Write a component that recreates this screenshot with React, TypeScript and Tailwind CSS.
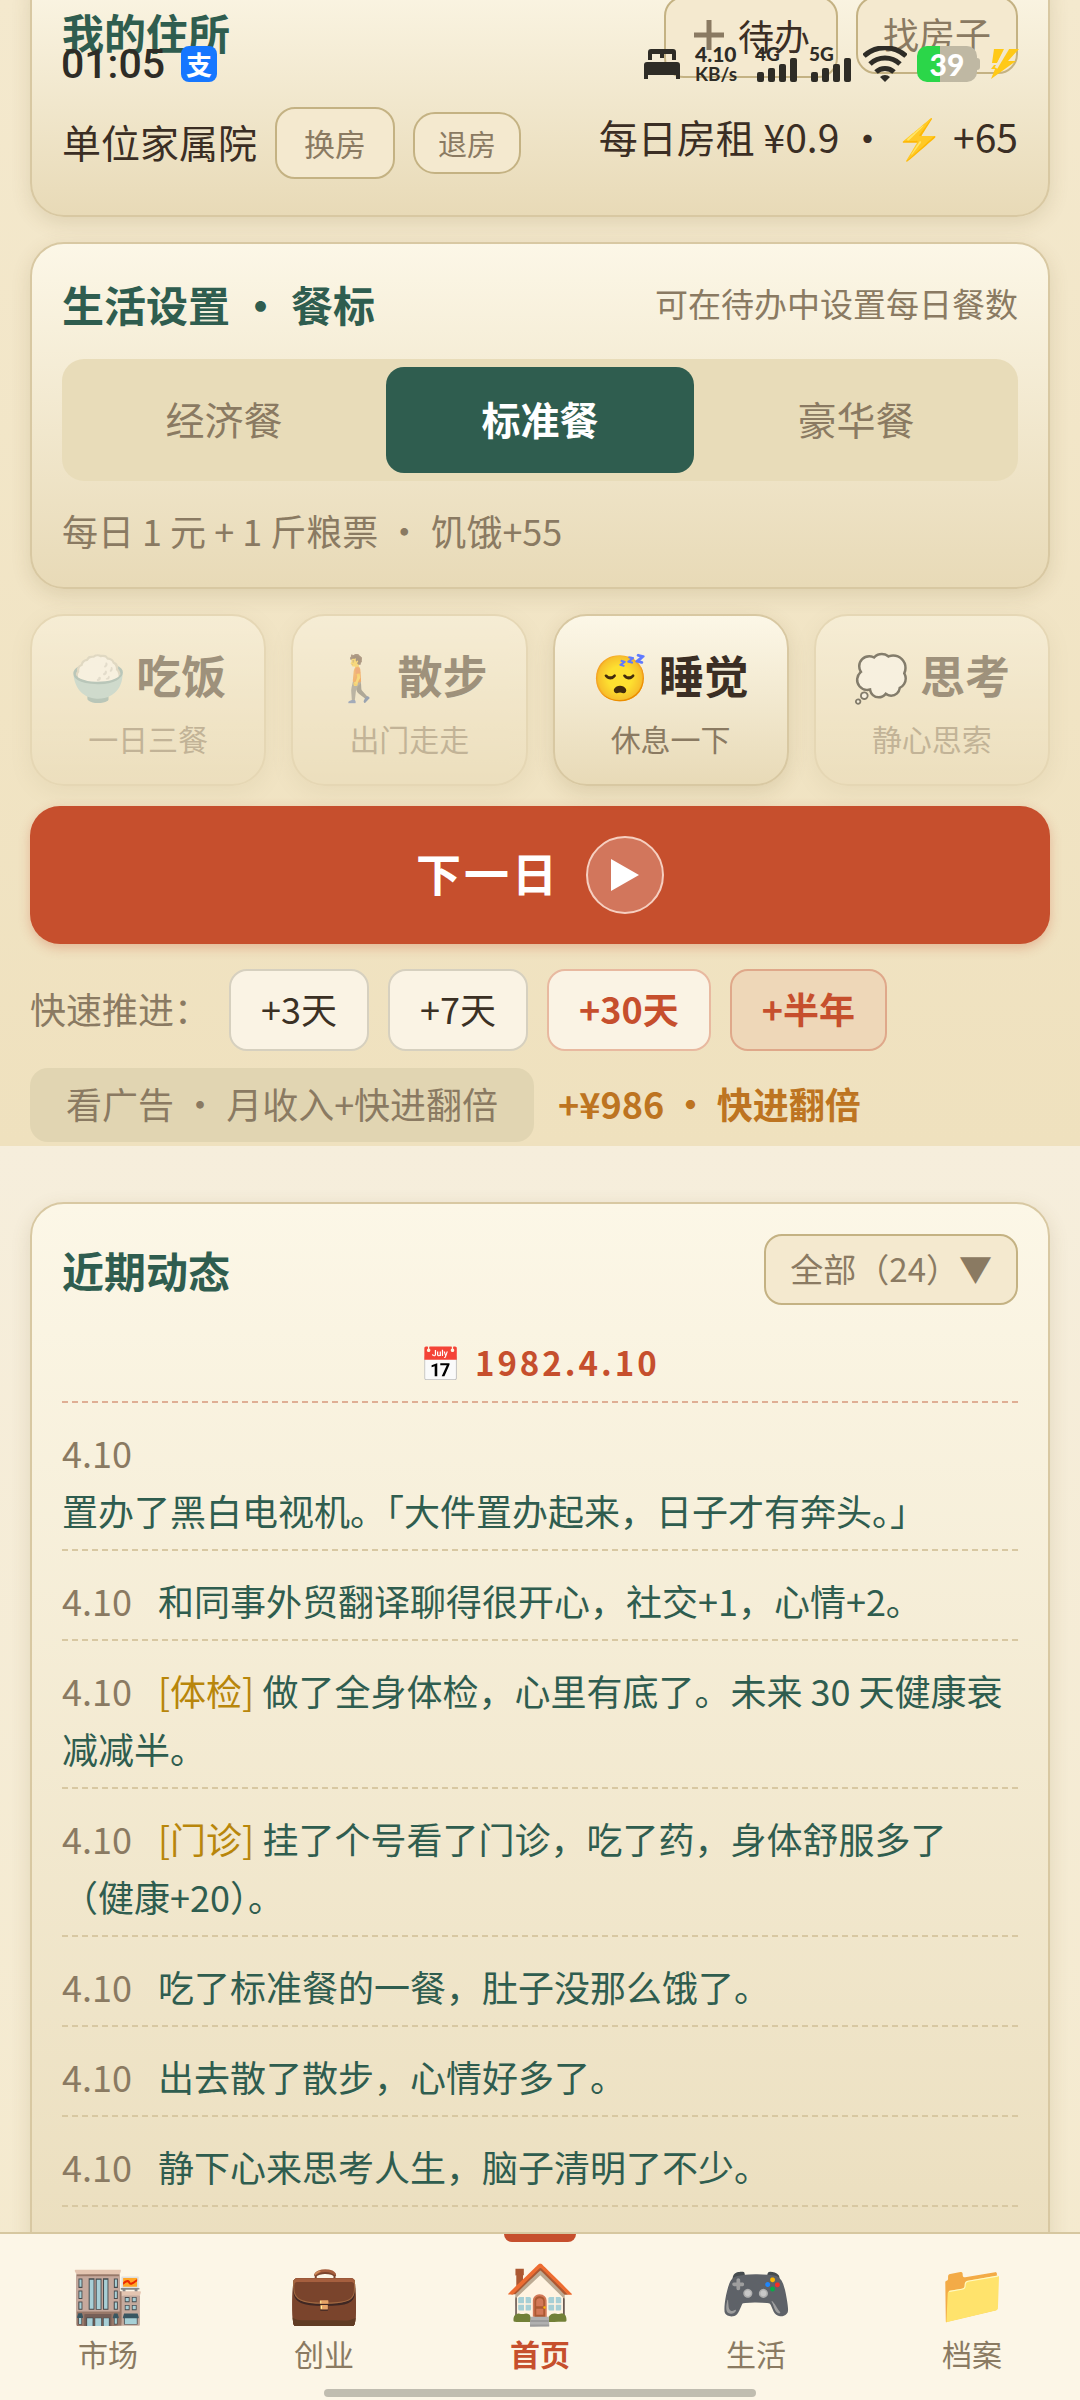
import type { ReactNode } from 'react'

const card =
  'rounded-[34px] border-2 border-[#d8c8a2] bg-linear-to-b from-[#fcf7e7] to-[#e8dab7] shadow-[0_6px_20px_rgba(100,75,30,0.14)]'
const smallButton = 'border-2 border-[#c4b283] bg-[#f4e9cf] text-[#8a7a62]'

const meals = ['经济餐', '标准餐', '豪华餐']

const actions = [
  { icon: '🍚', title: '吃饭', hint: '一日三餐', disabled: true },
  { icon: '🚶', title: '散步', hint: '出门走走', disabled: true },
  { icon: '😴', title: '睡觉', hint: '休息一下', disabled: false },
  { icon: '💭', title: '思考', hint: '静心思索', disabled: true },
]

const skips = [
  { label: '+3天', style: 'border-[#d6d0bf] bg-[#faf3e4] text-[#3b3024]' },
  { label: '+7天', style: 'border-[#d6d0bf] bg-[#faf3e4] text-[#3b3024]' },
  { label: '+30天', style: 'border-[#e8b9a0] bg-[#faf3e4] font-bold text-[#c64f2d]' },
  { label: '+半年', style: 'border-[#dfa88a] bg-[#eed7b8] font-bold text-[#c64f2d]' },
]

const logs = [
  { tag: '', text: '置办了黑白电视机。「大件置办起来，日子才有奔头。」', block: true },
  { tag: '', text: '和同事外贸翻译聊得很开心，社交+1，心情+2。' },
  { tag: '[体检]', text: '做了全身体检，心里有底了。未来 30 天健康衰减减半。' },
  { tag: '[门诊]', text: '挂了个号看了门诊，吃了药，身体舒服多了（健康+20）。' },
  { tag: '', text: '吃了标准餐的一餐，肚子没那么饿了。' },
  { tag: '', text: '出去散了散步，心情好多了。' },
  { tag: '', text: '静下心来思考人生，脑子清明了不少。' },
]

const tabs = [
  { icon: '🏬', label: '市场' },
  { icon: '💼', label: '创业' },
  { icon: '🏠', label: '首页', active: true },
  { icon: '🎮', label: '生活' },
  { icon: '📁', label: '档案' },
]

function Signal({ label }: { label: string }) {
  return (
    <div className="flex w-11 flex-col">
      <span className="text-[19px] leading-4 font-black">{label}</span>
      <svg className="-mt-1 h-6 w-11" viewBox="0 0 44 24" fill="currentColor">
        <rect x="2" y="14" width="7" height="10" rx="2" />
        <rect x="13" y="10" width="7" height="14" rx="2" />
        <rect x="24" y="6" width="7" height="18" rx="2" />
        <rect x="35" y="0" width="7" height="24" rx="2" />
      </svg>
    </div>
  )
}

function StatusBar() {
  return (
    <div className="absolute inset-x-0 top-0 z-20 flex items-center justify-between pt-[46px] pr-[60px] pl-[61px] font-['Lato','Noto_Sans_CJK_SC',sans-serif] text-[#2e2c26]">
      <div className="flex items-center gap-4">
        <span className="font-['Roboto',sans-serif] text-[41px] leading-9 font-medium">01:05</span>
        <span className="flex size-9 items-center justify-center rounded-lg bg-[#1677ff] font-['Noto_Sans_CJK_SC',sans-serif] text-[26px] leading-8 font-bold text-white">
          支
        </span>
      </div>
      <div className="flex h-9 items-center gap-[10px]">
        <svg className="mr-1 h-8 w-[38px]" viewBox="0 0 38 32" fill="currentColor">
          <path d="M5 12V4a3 3 0 0 1 3-3h22a3 3 0 0 1 3 3v8h-4V6h-8v4h-4V6H9v6z" />
          <path d="M1 31V17a3 3 0 0 1 3-3h30a3 3 0 0 1 3 3v14h-4v-4H5v4z" />
        </svg>
        <div className="mr-2 flex flex-col text-[21px] leading-[20px] font-black">
          <span>4.10</span>
          <span className="text-[19px] font-bold">KB/s</span>
        </div>
        <Signal label="4G" />
        <Signal label="5G" />
        <svg className="h-9 w-11" viewBox="0 0 44 36" fill="none" stroke="currentColor" strokeWidth="5">
          <path d="M1 10a31 31 0 0 1 42 0" />
          <path d="M7 18a22 22 0 0 1 30 0" />
          <path d="M13 26a13 13 0 0 1 18 0" />
          <path d="M17 31a7 7 0 0 1 10 0l-5 5z" fill="currentColor" stroke="none" />
        </svg>
        <div className="flex items-center">
          <div className="flex h-9 w-[60px] items-center justify-center rounded-[10px] bg-linear-to-r from-[#2bd649] from-38% to-[#bfb8a3] to-38% text-[30px] leading-9 font-black text-white">
            39
          </div>
          <div className="h-3 w-[3px] rounded-r bg-[#bfb8a3]" />
        </div>
        <svg className="h-[30px] w-[30px]" viewBox="0 0 30 30" fill="#ffc917">
          <path d="M4 0h10L7 14H2zM17 0h12L18 12h8L1 30 5 20H1l3-4h4z" />
          <path d="M18 -1L6 19" stroke="#f1e7cd" strokeWidth="3" />
        </svg>
      </div>
    </div>
  )
}

function Title({ children }: { children: ReactNode }) {
  return <h2 className="text-[42px] leading-[63px] font-bold text-[#2f5d4f]">{children}</h2>
}

function Home() {
  return (
    <section className={`${card} -mt-9 px-[30px] pt-[30px] pb-9`}>
      <div className="flex items-start justify-between">
        <div className="pt-1">
          <Title>我的住所</Title>
        </div>
        <div className="flex items-start gap-[18px]">
          <button className={`${smallButton} flex items-center gap-3 rounded-[20px] px-[26px] pt-[10px] pb-[14px] text-[36px] leading-[54px]`}>
            <svg className="size-[34px]" viewBox="0 0 34 34" stroke="#8a7a62" strokeWidth="5">
              <path d="M17 2v30M2 17h30" />
            </svg>
            <span className="text-[#3b2e24]">待办</span>
          </button>
          <button className={`${smallButton} rounded-[20px] px-[25px] pt-2 pb-3 text-[36px] leading-[54px]`}>找房子</button>
        </div>
      </div>
      <div className="mt-[29px] flex items-start justify-between text-[39px] leading-[58px] text-[#3b2e24]">
        <div className="flex items-center gap-[18px]">
          <span className="pb-1">单位家属院</span>
          <button className={`${smallButton} rounded-[20px] px-[27px] py-[10px] text-[31px] leading-[48px]`}>换房</button>
          <button className={`${smallButton} rounded-[22px] px-[23px] py-2 text-[29px] leading-[42px]`}>退房</button>
        </div>
        <span>每日房租 ¥0.9 · ⚡ +65</span>
      </div>
    </section>
  )
}

function MealSettings() {
  return (
    <section className={`${card} mt-[25px] px-[30px] pt-7 pb-7`}>
      <div className="flex items-center justify-between">
        <Title>生活设置 · 餐标</Title>
        <span className="text-[33px] text-[#8a7a62]">可在待办中设置每日餐数</span>
      </div>
      <div className="mt-6 flex gap-2 rounded-[22px] bg-[#e8dcb9] p-2">
        {meals.map((meal, i) => (
          <button
            key={meal}
            className={`flex-1 rounded-[18px] pt-[21px] pb-[25px] text-[39px] leading-[60px] ${
              i === 1 ? 'bg-[#2f5d4f] font-bold text-white' : 'text-[#8a7a62]'
            }`}
          >
            {meal}
          </button>
        ))}
      </div>
      <p className="mt-5 text-[36px] leading-[58px] text-[#8a7a62]">每日 1 元 + 1 斤粮票 · 饥饿+55</p>
    </section>
  )
}

function Actions() {
  return (
    <div className="mt-[25px] grid grid-cols-4 gap-[25px]">
      {actions.map((a) => (
        <button
          key={a.title}
          disabled={a.disabled}
          className={`${card} flex flex-col items-center pt-[26px] pb-6 disabled:opacity-45`}
        >
          <span className="text-[45px] leading-[66px] font-bold whitespace-nowrap text-[#3b2e24]">
            {a.icon} {a.title}
          </span>
          <span className="mt-2 text-[30px] leading-[44px] text-[#8a7a62]">{a.hint}</span>
        </button>
      ))}
    </div>
  )
}

function Advance() {
  return (
    <>
      <button className="mt-5 flex w-full items-center justify-center gap-[26px] rounded-[30px] bg-[#c64f2d] py-[30px] text-white shadow-[0_4px_12px_rgba(198,79,45,0.3)]">
        <span className="pb-1 text-[45px] leading-[66px] font-bold tracking-[3px]">下一日</span>
        <span className="flex size-[78px] items-center justify-center rounded-full border-2 border-[#f6cfc0] bg-[#d2765c]">
          <svg className="h-8 w-7" viewBox="0 0 28 32" fill="white">
            <path d="M0 0l28 16L0 32z" />
          </svg>
        </span>
      </button>
      <div className="mt-[25px] flex items-center gap-[19px] text-[36px] leading-[54px]">
        <span className="pb-1 text-[#8a7a62]">快速推进：</span>
        {skips.map((s) => (
          <button key={s.label} className={`rounded-[18px] border-2 px-[30px] pt-[10px] pb-[14px] ${s.style}`}>
            {s.label}
          </button>
        ))}
      </div>
      <div className="mt-[17px] flex items-center gap-6 text-[36px] leading-[58px]">
        <button className="rounded-[18px] bg-[#e1d5b2] px-9 pt-[6px] pb-[10px] text-[#8a7a62]">看广告 · 月收入+快进翻倍</button>
        <span className="pb-1 font-bold text-[#bd7421]">+¥986 · 快进翻倍</span>
      </div>
    </>
  )
}

function RecentLogs() {
  return (
    <section className={`${card} px-[30px] pt-[30px] pb-[240px]`}>
      <div className="flex items-center justify-between">
        <Title>近期动态</Title>
        <button className={`${smallButton} rounded-[18px] px-6 pt-2 pb-[10px] text-[33px] leading-[49px]`}>全部（24）▼</button>
      </div>
      <div className="mt-8 border-b-2 border-dashed border-[#dfae94] pb-[14px] text-center text-[33px] leading-[50px] font-bold tracking-[3px] text-[#c64f2d]">
        📅 1982.4.10
      </div>
      <ul className="text-[36px] leading-[58px] text-[#2f5d4f]">
        {logs.map((log) => (
          <li key={log.text} className="border-b-2 border-dashed border-[#d8c8a2] pt-5 pb-[10px]">
            <span className="mr-[26px] text-[#8a7a62]">4.10</span>
            {log.tag && <span className="text-[#b8860b]">{log.tag} </span>}
            <span className={log.block ? 'block' : ''}>{log.text}</span>
          </li>
        ))}
      </ul>
    </section>
  )
}

function TabBar() {
  return (
    <nav className="relative z-10 shrink-0 border-t-2 border-[#d6c7a0] bg-[#fcf6e7] pb-[3px]">
      <div className="grid grid-cols-5">
        {tabs.map((tab) => (
          <a
            key={tab.label}
            href="#"
            className={`relative flex flex-col items-center pt-[21px] ${tab.active ? 'font-bold text-[#c64f2d]' : 'text-[#8a7a62]'}`}
          >
            {tab.active && <span className="absolute top-0 h-2 w-[72px] rounded-b-lg bg-[#c64f2d]" />}
            <span className="text-[58px] leading-[68px]">{tab.icon}</span>
            <span className="mt-[6px] text-[30px] leading-[48px]">{tab.label}</span>
          </a>
        ))}
      </div>
      <div className="mx-auto mt-3 h-2 w-2/5 rounded-full bg-[#c0bdb0]" />
    </nav>
  )
}

function App() {
  return (
    <div
      lang="zh-CN"
      className="relative flex h-screen flex-col overflow-hidden bg-[#f4e9cf] font-['Noto_Sans_CJK_SC','Noto_Color_Emoji',sans-serif]"
    >
      <StatusBar />
      <main className="min-h-0 flex-1 overflow-hidden">
        <div className="flow-root bg-linear-to-b from-[#f4e9ce] to-[#efe1be] px-[30px] pb-1">
          <Home />
          <MealSettings />
          <Actions />
          <Advance />
        </div>
        <div className="bg-linear-to-b from-[#f6eedc] to-[#f4e9cc] px-[30px] pt-14">
          <RecentLogs />
        </div>
      </main>
      <TabBar />
    </div>
  )
}

export default App
